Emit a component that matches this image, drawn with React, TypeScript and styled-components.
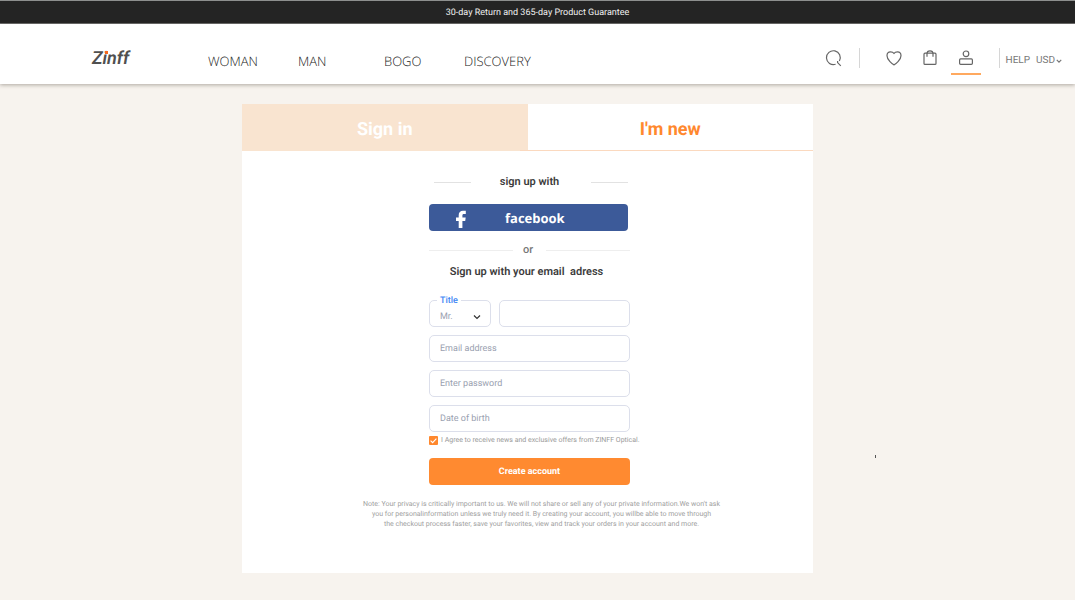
import React from "react";
import styled, { createGlobalStyle } from "styled-components";

const GlobalStyle = createGlobalStyle`
  *, *::before, *::after { box-sizing: border-box; }
  body {
    margin: 0;
    background: #f7f3ee;
    font-family: Roboto, "Liberation Sans", sans-serif;
    color: #3c3c3c;
    text-rendering: geometricPrecision;
  }
  button, input, select { font-family: inherit; margin: 0; text-rendering: inherit; }
  a { color: inherit; text-decoration: none; }
`;

const Announcement = styled.p`
  margin: 0;
  height: 24px;
  border-top: 1px solid #8d8f8e;
  border-bottom: 1px solid #6c6c6c;
  background: #242424;
  color: #f1f1f1;
  font: 400 9px/24px Roboto, sans-serif;
  text-align: center;
`;

const Header = styled.header`
  position: relative;
  display: flex;
  align-items: center;
  height: 60px;
  padding: 8px 13px 0 92px;
  background: #fff;
  box-shadow: 0 1px 4px rgba(60, 50, 40, 0.4);
`;

const Logo = styled.a`
  position: relative;
  width: 116px;
  padding-top: 2px;
  font: italic 600 18px/24px Roboto, sans-serif;
  color: #505050;
`;

const LogoDot = styled.span`
  position: absolute;
  left: 13px;
  top: 6px;
  width: 3px;
  height: 3px;
  background: #f5681f;
`;

const Nav = styled.nav`
  display: grid;
  grid-template-columns: 90px 86px 80px auto;
  padding-top: 5px;
  font: 300 13px/20px "Open Sans", sans-serif;
  color: #222;
`;

const Actions = styled.div`
  display: flex;
  align-items: center;
  height: 34px;
  margin-left: auto;
  color: #666;
`;

const IconButton = styled.button<{ $active?: boolean }>`
  display: flex;
  justify-content: center;
  align-items: flex-start;
  width: 30px;
  height: 33px;
  padding: 7px 0 0;
  border: 0;
  border-bottom: 2px solid ${(p) => (p.$active ? "#ffa95f" : "transparent")};
  background: none;
  color: inherit;
`;

const IconGroup = styled.div`
  display: flex;
  gap: 6px;
  padding: 0 18px 0 19px;
`;

const Divider = styled.span<{ $gap?: number }>`
  width: 1px;
  height: 20px;
  margin-left: ${(p) => p.$gap ?? 0}px;
  background: #d6d6d6;
`;

const Utility = styled.div`
  display: flex;
  align-items: center;
  gap: 6px;
  padding: 5px 0 0 6px;
  font-size: 10px;
  line-height: 16px;
  color: #777;
`;

const CurrencyButton = styled.button`
  display: flex;
  align-items: center;
  gap: 1px;
  padding: 0;
  border: 0;
  background: none;
  color: inherit;
  font-size: 10px;
  line-height: 16px;
`;

const Main = styled.main`
  display: flex;
  justify-content: center;
  padding: 20px 20px 27px 0;
`;

const Card = styled.section`
  position: relative;
  width: 100%;
  max-width: 571px;
  background: #fff;
`;

const Tabs = styled.div`
  display: grid;
  grid-template-columns: 1fr 1fr;
`;

const Tab = styled.button<{ $active?: boolean }>`
  position: relative;
  height: 47px;
  padding: 4px 0 0;
  border: 0;
  background: ${(p) => (p.$active ? "#fff" : "#f9e4d0")};
  color: ${(p) => (p.$active ? "#ff882e" : "#fff")};
  font-size: 18px;
  font-weight: 700;

  &::after {
    content: ${(p) => (p.$active ? '""' : "none")};
    position: absolute;
    left: -8px;
    right: 0;
    bottom: 0;
    height: 1px;
    background: #fbd9bf;
  }
`;

const Form = styled.form`
  display: flex;
  flex-direction: column;
  width: 205px;
  margin: 0 auto;
  padding: 23px 0 0 4px;
`;

const Separator = styled.div<{ $inset?: boolean }>`
  display: flex;
  align-items: center;
  gap: ${(p) => (p.$inset ? 29 : 10)}px;
  padding: ${(p) => (p.$inset ? "0 2px 0 5px" : "0")};
  font-size: 11px;
  font-weight: ${(p) => (p.$inset ? 600 : 500)};
  line-height: 16px;
  color: ${(p) => (p.$inset ? "#3c3c3c" : "#777")};
  white-space: nowrap;

  &::before, &::after {
    content: "";
    flex: 1;
    height: 1px;
    background: ${(p) => (p.$inset ? "#e2e2e2" : "#eee")};
  }
  &::after { margin-left: 3px; }
`;

const FacebookButton = styled.button`
  display: grid;
  grid-template-columns: 64px 1fr;
  align-items: center;
  width: 199px;
  height: 27px;
  margin: 14px 0 11px;
  padding: 0;
  border: 0;
  border-radius: 4px;
  background: #3c5a99;
  color: #fff;
  font: 700 13px/20px "Open Sans", sans-serif;

  svg { justify-self: center; align-self: end; }
  span { justify-self: start; padding-left: 12px; }
`;

const FormHeading = styled.h1`
  align-self: center;
  margin: 6px 6px 20px 0;
  font-size: 11px;
  font-weight: 600;
  line-height: 16px;
  white-space: pre;
`;

const Fields = styled.div`
  display: grid;
  grid-template-columns: 62px 1fr;
  gap: 8px;
`;

const fieldStyle = `
  width: 100%;
  height: 27px;
  border: 1px solid #dcdfeb;
  border-radius: 5px;
  background: #fff;
  font-size: 9px;
  color: #9aa1b0;
  outline: 0;
`;

const Input = styled.input<{ $wide?: boolean }>`
  ${fieldStyle}
  grid-column: ${(p) => (p.$wide ? "1 / -1" : "auto")};
  padding: 1px 10px 0;
  &::placeholder { color: #9aa1b0; opacity: 1; }
`;

const SelectField = styled.div`
  position: relative;

  label {
    position: absolute;
    left: 8px;
    top: -4px;
    padding: 0 3px;
    background: #fff;
    color: #4388f5;
    font-size: 9px;
    font-weight: 500;
    line-height: 10px;
  }
  svg {
    position: absolute;
    right: 10px;
    top: 13px;
    color: #333;
    pointer-events: none;
  }
`;

const Select = styled.select`
  ${fieldStyle}
  appearance: none;
  padding: 6px 10px 0;
`;

const Consent = styled.label`
  display: flex;
  align-items: center;
  gap: 3px;
  height: 9px;
  margin: 4px 0 13px;
  font-size: 7px;
  line-height: 9px;
  color: #999;
  white-space: nowrap;
`;

const Checkbox = styled.input`
  appearance: none;
  flex: none;
  width: 9px;
  height: 9px;
  border-radius: 1px;
  background: #ff882e;
`;

const CheckMark = styled.svg`
  position: absolute;
  left: 0;
  top: 0;
  pointer-events: none;
`;

const CheckBoxFrame = styled.span`
  position: relative;
  display: flex;
`;

const SubmitButton = styled.button`
  height: 27px;
  padding: 1px 0 0;
  border: 0;
  border-radius: 4px;
  background: #ff8a30;
  color: #fff;
  font-size: 9px;
  font-weight: 700;
`;

const Note = styled.p`
  margin: 0;
  padding: 14px 0 44px 28px;
  font-size: 7px;
  line-height: 10px;
  color: #a0a0a0;
  text-align: center;
`;

const StrayMark = styled.span`
  position: absolute;
  left: calc(100% + 62px);
  top: 351px;
  width: 1px;
  height: 3px;
  background: #555;
`;

const Chevron = ({ size, width = 1 }: { size: number; width?: number }) => (
  <svg width={size} height={size} viewBox="0 0 8 8" fill="none" stroke="currentColor" strokeWidth={width} aria-hidden="true">
    <path d="M1 2.5 4 5.5 7 2.5" />
  </svg>
);

export default function App() {
  return (
    <>
      <GlobalStyle />
      <Announcement>30-day Return and 365-day Product Guarantee</Announcement>
      <Header>
        <Logo href="#">
          Zinff
          <LogoDot />
        </Logo>
        <Nav>
          <a href="#woman">WOMAN</a>
          <a href="#man">MAN</a>
          <a href="#bogo">BOGO</a>
          <a href="#discovery">DISCOVERY</a>
        </Nav>
        <Actions>
          <IconButton aria-label="Search">
            <svg width="18" height="18" viewBox="0 0 18 18" fill="none" stroke="currentColor" strokeWidth="1.2">
              <path d="M11.6 15.2A6.9 6.9 0 1 1 15.4 12M13.6 12V13.6L16.8 16.8" />
            </svg>
          </IconButton>
          <Divider $gap={11} />
          <IconGroup>
            <IconButton aria-label="Favorites">
              <svg width="18" height="18" viewBox="0 0 18 18" fill="none" stroke="currentColor" strokeWidth="1.2" strokeLinejoin="round">
                <path d="M9 15.9C7.6 15.4 2 10.9 2 6.8 2 4.4 3.7 2.9 5.5 2.9 7.1 2.9 8.3 3.4 9 4.5 9.7 3.4 10.9 2.9 12.5 2.9 14.3 2.9 16 4.4 16 6.8 16 10.9 10.4 15.4 9 15.9Z" />
              </svg>
            </IconButton>
            <IconButton aria-label="Shopping bag">
              <svg width="18" height="18" viewBox="0 0 18 18" fill="none" stroke="currentColor" strokeWidth="1.2">
                <rect x="3" y="4.2" width="12" height="11.2" rx="1" />
                <path d="M6 7.8V4.7C6 .9 12 .9 12 4.7V7.8" />
              </svg>
            </IconButton>
            <IconButton $active aria-label="Account">
              <svg width="18" height="18" viewBox="0 0 18 18" fill="none" stroke="currentColor" strokeWidth="1.2">
                <circle cx="9" cy="4.8" r="2.8" />
                <rect x="2.6" y="9.9" width="12.8" height="5.4" rx="1" />
              </svg>
            </IconButton>
          </IconGroup>
          <Divider />
          <Utility>
            <a href="#help">HELP</a>
            <CurrencyButton>
              USD
              <Chevron size={6} width={1.6} />
            </CurrencyButton>
          </Utility>
        </Actions>
      </Header>
      <Main>
        <Card>
          <Tabs>
            <Tab type="button">Sign in</Tab>
            <Tab type="button" $active>I'm new</Tab>
          </Tabs>
          <Form>
            <Separator $inset>sign up with</Separator>
            <FacebookButton type="button">
              <svg width="12" height="22" viewBox="0 0 12 22" fill="#fff" aria-hidden="true">
                <path d="M3.7 19V12H1V8.6H3.7V6.3C3.7 3.5 5.3 1.8 8 1.8H10.8V5.1H8.9C7.8 5.1 7.4 5.6 7.4 6.6V8.6H10.7L10.2 12H7.4V19Z" />
              </svg>
              <span>facebook</span>
            </FacebookButton>
            <Separator>or</Separator>
            <FormHeading>{"Sign up with your email  adress"}</FormHeading>
            <Fields>
              <SelectField>
                <Select id="title" defaultValue="Mr.">
                  <option>Mr.</option>
                  <option>Mrs.</option>
                  <option>Ms.</option>
                </Select>
                <label htmlFor="title">Title</label>
                <Chevron size={8} width={1.2} />
              </SelectField>
              <Input aria-label="Name" type="text" />
              <Input $wide aria-label="Email address" type="email" placeholder="Email address" />
              <Input $wide aria-label="Password" type="password" placeholder="Enter password" />
              <Input $wide aria-label="Date of birth" type="text" placeholder="Date of birth" />
            </Fields>
            <Consent>
              <CheckBoxFrame>
                <Checkbox type="checkbox" defaultChecked />
                <CheckMark width="9" height="9" viewBox="0 0 9 9" fill="none" stroke="#fff" strokeWidth="1.1">
                  <path d="M1.6 4.6 3.6 6.6 7.4 2.6" />
                </CheckMark>
              </CheckBoxFrame>
              I Agree to receive news and exclusive offers from ZINFF Optical.
            </Consent>
            <SubmitButton type="button">Create account</SubmitButton>
          </Form>
          <Note>
            Note: Your privacy is critically important to us. We will not share or sell any of your private information.We won't ask
            <br />
            you for personalinformation unless we truly need it. By creating your account, you willbe able to move through
            <br />
            the checkout process faster, save your favorites, view and track your orders in your account and more.
          </Note>
          <StrayMark />
        </Card>
      </Main>
    </>
  );
}
